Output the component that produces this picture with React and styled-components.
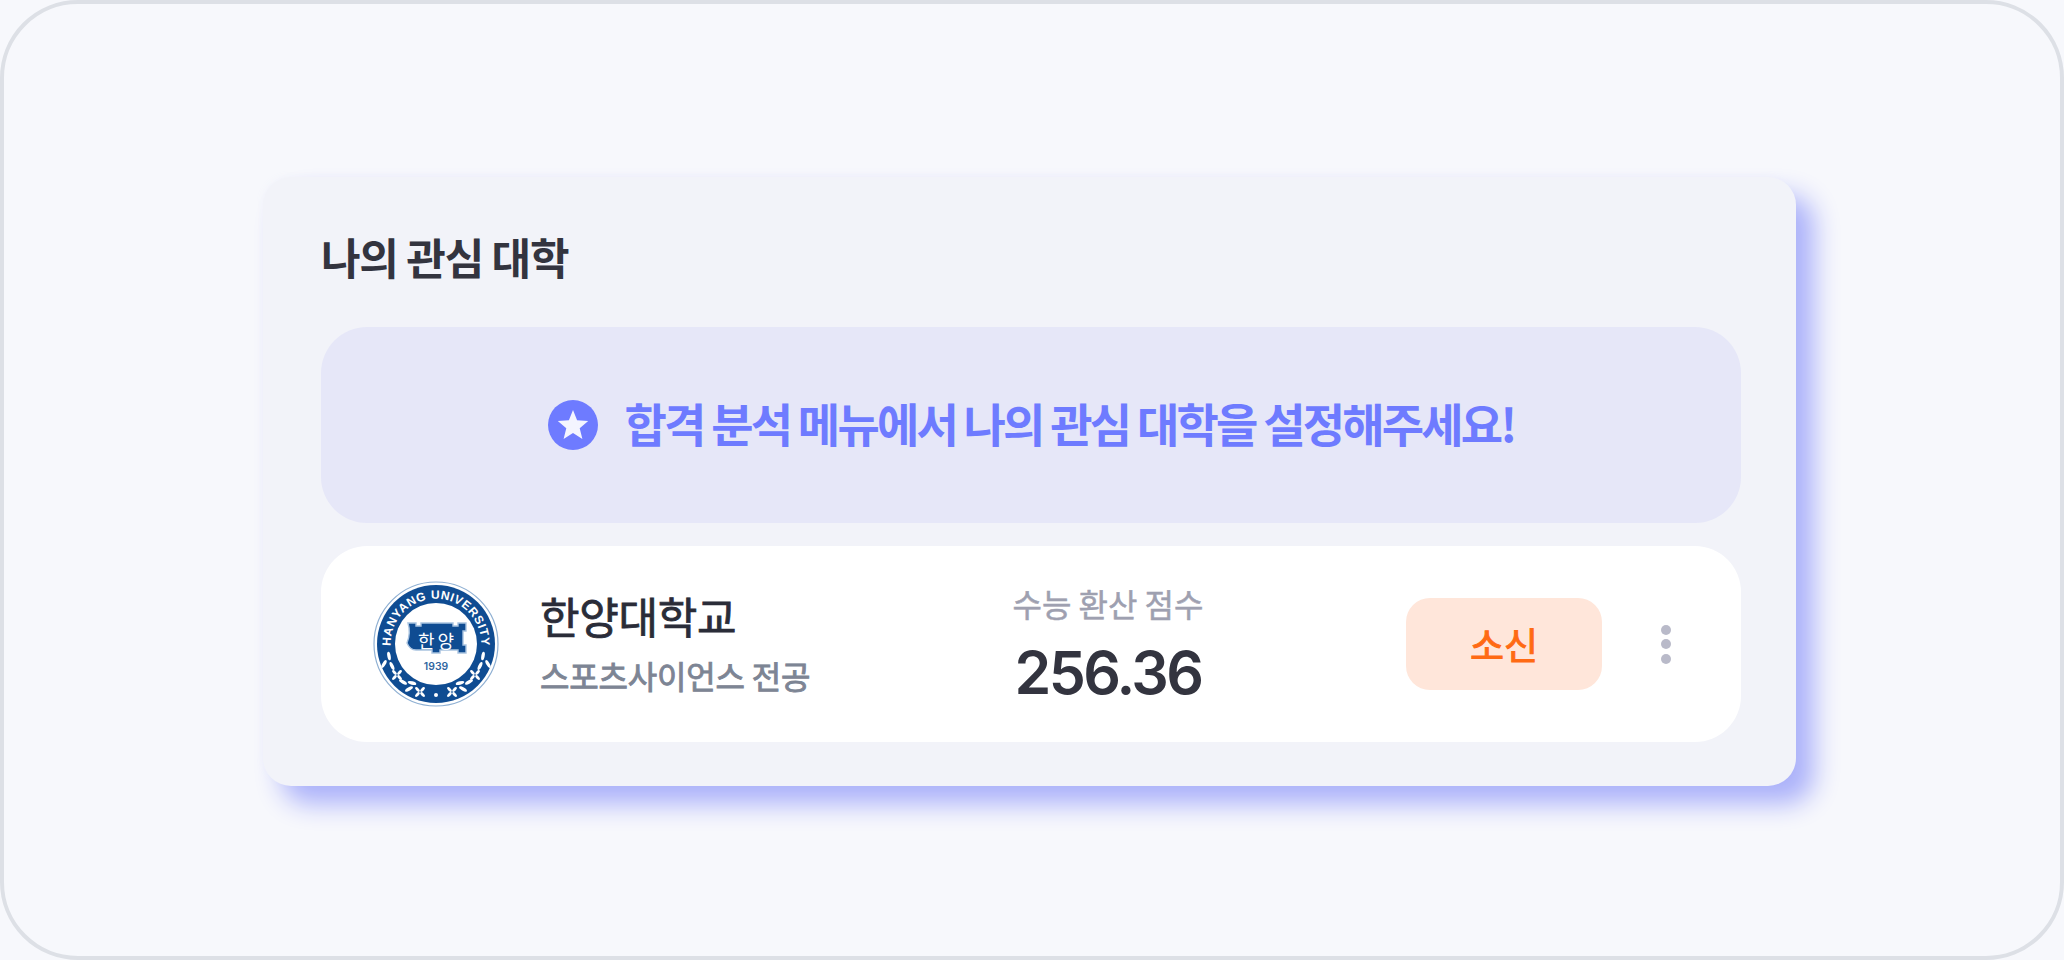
import React from "react";
import styled, { createGlobalStyle } from "styled-components";

const Global = createGlobalStyle`
  html, body { margin: 0; padding: 0; background: #f7f8fc; }
  body { font-family: "Noto Sans CJK KR", "Noto Sans", sans-serif; }
`;

const Frame = styled.div`
  box-sizing: border-box;
  width: 2064px;
  height: 960px;
  padding: 173px 0 0 259px;
  background: #f7f8fc;
  border: 4px solid #dde0e6;
  border-radius: 78px;
  overflow: hidden;
`;

const Card = styled.section`
  box-sizing: border-box;
  width: 1533px;
  height: 609px;
  padding: 49px 55px 44px 58px;
  display: flex;
  flex-direction: column;
  background: #f2f3f9;
  border-radius: 28px;
  box-shadow: 18px 18px 26px #abb1fa, -2px -2px 6px #f4f5fb;
`;

const Title = styled.h2`
  margin: 0 0 41px;
  height: 60px;
  line-height: 60px;
  font-size: 43px;
  font-weight: 700;
  letter-spacing: -1.2px;
  color: #33343f;
`;

const Notice = styled.div`
  height: 196px;
  flex: none;
  display: flex;
  align-items: center;
  justify-content: center;
  gap: 27px;
  background: #e6e7f8;
  border-radius: 46px;
  margin-bottom: 23px;
`;

const NoticeText = styled.span`
  font-size: 46px;
  font-weight: 700;
  letter-spacing: -2.8px;
  line-height: 60px;
  padding-bottom: 6px;
  color: #6e7bff;
`;

const Row = styled.div`
  height: 196px;
  flex: none;
  box-sizing: border-box;
  display: flex;
  align-items: center;
  padding-left: 52px;
  background: #fff;
  border-radius: 46px;
`;

const Logo = styled.svg`
  width: 126px;
  height: 126px;
  flex: none;
  margin-right: 41px;
`;

const NameCol = styled.div`
  width: 468px;
  flex: none;
  display: flex;
  flex-direction: column;
  gap: 14px;
  padding-bottom: 4px;
`;

const Name = styled.div`
  font-size: 43px;
  font-weight: 400;
  -webkit-text-stroke: 0.8px #2a2c38;
  line-height: 52px;
  letter-spacing: -0.3px;
  color: #2a2c38;
`;

const Major = styled.div`
  font-size: 32px;
  font-weight: 400;
  -webkit-text-stroke: 0.9px #7d8594;
  line-height: 40px;
  letter-spacing: -0.2px;
  color: #7d8594;
`;

const ScoreCol = styled.div`
  width: 200px;
  flex: none;
  display: flex;
  flex-direction: column;
  align-items: center;
  gap: 18px;
`;

const ScoreLabel = styled.div`
  font-size: 32px;
  font-weight: 400;
  -webkit-text-stroke: 0.5px #9ea0b0;
  line-height: 40px;
  color: #9ea0b0;
`;

const ScoreValue = styled.div`
  font-family: Inter, "Noto Sans CJK KR", sans-serif;
  font-size: 59px;
  font-weight: 600;
  line-height: 64px;
  letter-spacing: -2.6px;
  color: #33343f;
`;

const Tag = styled.div`
  width: 196px;
  height: 92px;
  flex: none;
  margin-left: 198px;
  display: flex;
  align-items: center;
  justify-content: center;
  border-radius: 24px;
  background: #ffe6da;
  color: #ff6a13;
  font-size: 37px;
  font-weight: 400;
  -webkit-text-stroke: 1px #ff6a13;
`;

const Dots = styled.div`
  display: flex;
  flex-direction: column;
  gap: 4.5px;
  margin-left: 59px;
`;

const Dot = styled.span`
  display: block;
  width: 10px;
  height: 10px;
  border-radius: 50%;
  background: #b9bac9;
`;

const StarIcon = styled.svg`
  width: 50px;
  height: 50px;
  flex: none;
`;

const StarBadge = () => (
  <StarIcon viewBox="0 0 50 50">
    <circle cx="25" cy="25" r="25" fill="#6e7bff" />
    <path
      d="M25 10 L29.1 20.3 L40.2 21.1 L31.7 28.2 L34.4 38.9 L25 33 L15.6 38.9 L18.3 28.2 L9.8 21.1 L20.9 20.3 Z"
      fill="#f4f5ff"
    />
  </StarIcon>
);

const leaves = [
  [-47, 12, -10],
  [-52, 20, 30],
  [-44, 22, -25],
  [-33, 38, -60],
  [-27, 45, 60],
  [-24, 39, -75],
];
const flowers = [
  [-39, 31],
  [-16, 48],
];

const Flower = ({ x, y }) => (
  <g transform={`translate(${x} ${y}) rotate(45)`} fill="#fff">
    <ellipse cx="0" cy="-3.6" rx="1.5" ry="3" />
    <ellipse cx="0" cy="3.6" rx="1.5" ry="3" />
    <ellipse cx="-3.6" cy="0" rx="3" ry="1.5" />
    <ellipse cx="3.6" cy="0" rx="3" ry="1.5" />
  </g>
);

const PLATE =
  "M -28 -21 H -20 V -18 H -15 V -21 H 17 V -18 H 22 V -21 H 30 V -13 H 27 V 1 H 30 V 9 H 22 V 6 H 4 V 9 H -4 V 6 H -20 Q -26 6 -29 -1 Q -25 -11 -28 -21 Z";

const HanyangLogo = () => (
  <Logo viewBox="-63 -63 126 126">
    <defs>
      <path id="arcTop" d="M -44.4 9 A 45.3 45.3 0 1 1 44.4 9" />
    </defs>
    <circle r="62" fill="#fff" stroke="#8fb0d3" strokeWidth="1.2" />
    <circle r="59" fill="#0f4c92" />
    <circle r="41" fill="#fff" />
    <text
      fontFamily="'Liberation Sans', sans-serif"
      fontSize="12"
      fontWeight="700"
      fill="#fff"
      letterSpacing="0.6"
    >
      <textPath href="#arcTop" startOffset="50%" textAnchor="middle">
        HANYANG UNIVERSITY
      </textPath>
    </text>
    <path d={PLATE} fill="#0f4c92" stroke="#a9c3e0" strokeWidth="1.4" />
    <text
      x="1.5"
      y="3.5"
      textAnchor="middle"
      fontFamily="'Noto Sans CJK KR', sans-serif"
      fontSize="18"
      fontWeight="400"
      fill="#fff"
      letterSpacing="3"
    >
      한양
    </text>
    <text
      x="0"
      y="26"
      textAnchor="middle"
      fontFamily="Inter, sans-serif"
      fontSize="10.4"
      fontWeight="600"
      fill="#2f659f"
    >
      1939
    </text>
    {leaves.flatMap(([x, y, r], i) => [
      <ellipse key={`l${i}`} cx={x} cy={y} rx="1.7" ry="4.4" transform={`rotate(${r} ${x} ${y})`} fill="#fff" />,
      <ellipse key={`r${i}`} cx={-x} cy={y} rx="1.7" ry="4.4" transform={`rotate(${-r} ${-x} ${y})`} fill="#fff" />,
    ])}
    {flowers.flatMap(([x, y], i) => [
      <Flower key={`fl${i}`} x={x} y={y} />,
      <Flower key={`fr${i}`} x={-x} y={y} />,
    ])}
    <circle cx="0" cy="51" r="2" fill="#fff" />
  </Logo>
);

export default function App() {
  return (
    <>
      <Global />
      <Frame>
        <Card>
          <Title>나의 관심 대학</Title>
          <Notice>
            <StarBadge />
            <NoticeText>합격 분석 메뉴에서 나의 관심 대학을 설정해주세요!</NoticeText>
          </Notice>
          <Row>
            <HanyangLogo />
            <NameCol>
              <Name>한양대학교</Name>
              <Major>스포츠사이언스 전공</Major>
            </NameCol>
            <ScoreCol>
              <ScoreLabel>수능 환산 점수</ScoreLabel>
              <ScoreValue>256.36</ScoreValue>
            </ScoreCol>
            <Tag>소신</Tag>
            <Dots>
              <Dot />
              <Dot />
              <Dot />
            </Dots>
          </Row>
        </Card>
      </Frame>
    </>
  );
}
